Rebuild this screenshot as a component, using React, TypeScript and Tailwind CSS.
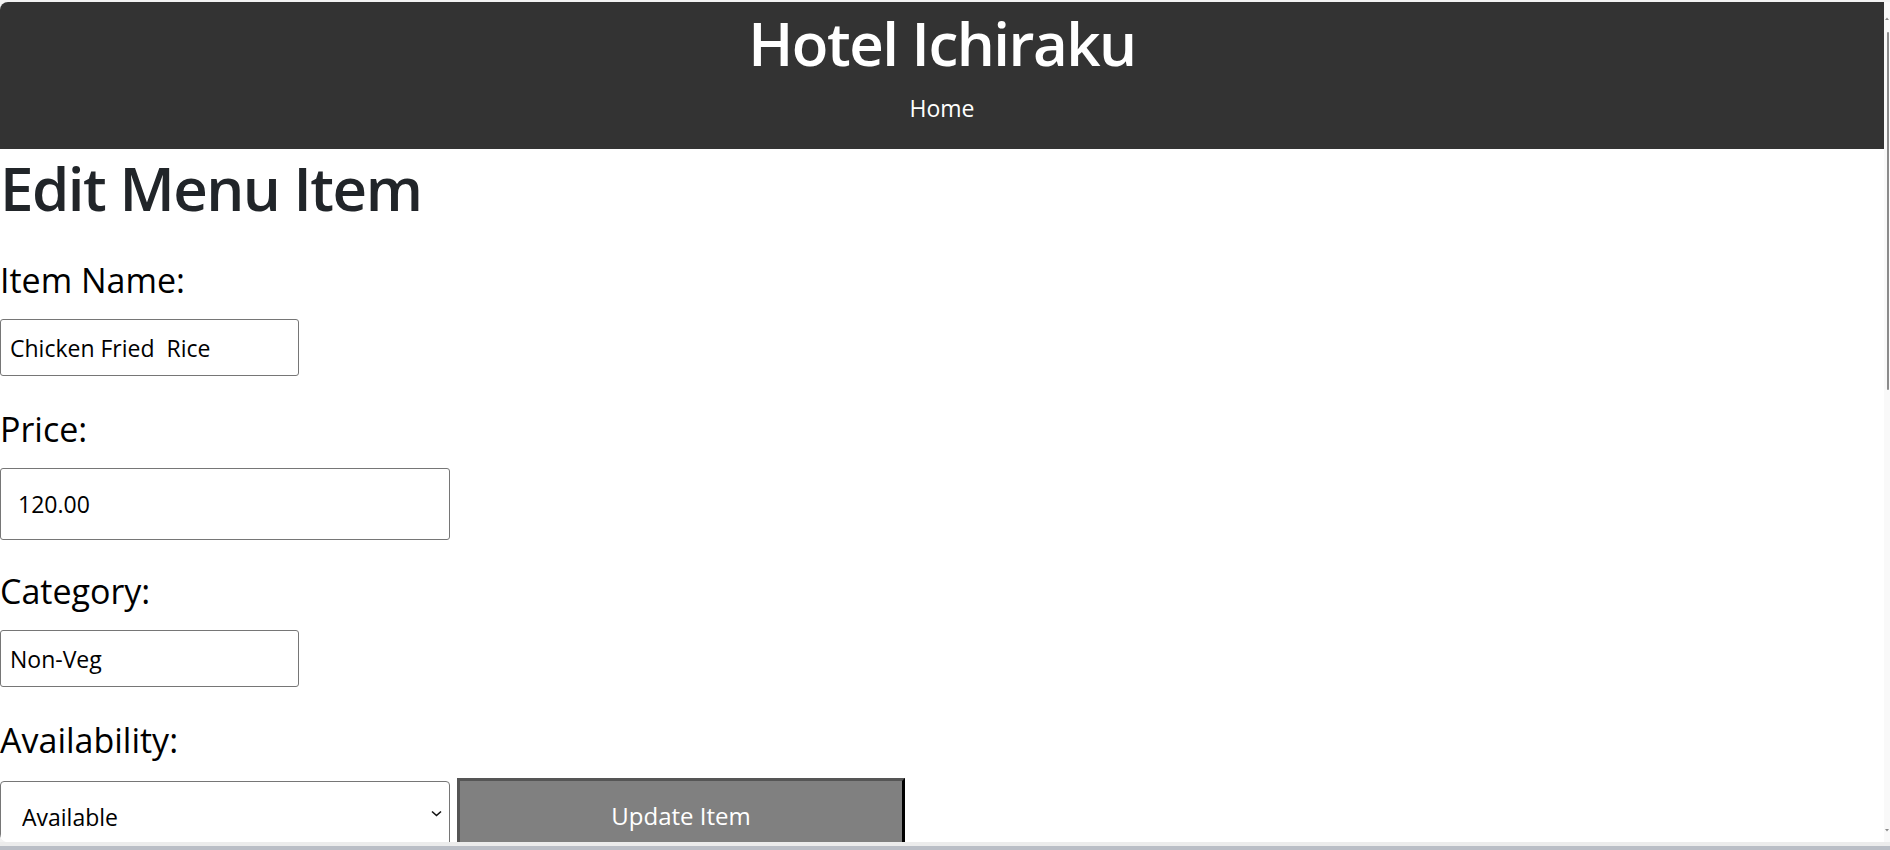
import React from 'react';

const font = { fontFamily: '"Open Sans", "Noto Sans", sans-serif' };

const App: React.FC = () => {
  return (
    <div className="w-[1890px] h-[850px] bg-[#f3f3f3] pt-[2px] flex flex-col overflow-hidden" style={font}>
      {/* browser window */}
      <div className="h-[840px] flex bg-white rounded-l-lg overflow-hidden">
        <div className="w-[1884px] h-full overflow-hidden">
          {/* Header */}
          <header className="bg-[#333333] h-[147px] text-white text-center">
            <h1 className="text-[60px] leading-[82px] font-semibold tracking-[-1.5px]">Hotel Ichiraku</h1>
            <nav className="mt-[6px]">
              <a className="text-[23px] leading-[36px] text-white">Home</a>
            </nav>
          </header>

          <h1 className="text-[60px] leading-[78px] font-semibold tracking-[-1.5px] text-[#212529]">Edit Menu Item</h1>

          <form className="flex flex-col items-start text-black">
            <label className="text-[34px] leading-[54px] mt-[26px]">Item Name:</label>
            <input
              defaultValue="Chicken Fried  Rice"
              className="mt-[12px] w-[299px] h-[57px] border border-[#767676] rounded-[3px] pl-[9px] text-[23px] outline-none"
            />

            <label className="text-[34px] leading-[54px] mt-[26px]">Price:</label>
            <input
              defaultValue="120.00"
              className="mt-[12px] w-[450px] h-[72px] border border-[#767676] rounded-[3px] pl-[17px] text-[23px] outline-none"
            />

            <label className="text-[34px] leading-[54px] mt-[24px]">Category:</label>
            <input
              defaultValue="Non-Veg"
              className="mt-[12px] w-[299px] h-[57px] border border-[#767676] rounded-[3px] pl-[9px] text-[23px] outline-none"
            />

            <label className="text-[34px] leading-[54px] mt-[26px]">Availability:</label>
            <div className="flex items-start gap-[7px]">
              <div className="relative mt-[14px]">
                <select className="appearance-none w-[450px] h-[72px] border border-[#767676] rounded-[4px] pl-[21px] text-[23px] bg-white outline-none">
                  <option>Available</option>
                  <option>Not Available</option>
                </select>
                <svg className="absolute left-[431px] top-[29px]" width="11" height="7" viewBox="0 0 11 7" fill="none">
                  <path d="M1 1.5 L5.5 5.5 L10 1.5" stroke="#111" strokeWidth="1.6" />
                </svg>
              </div>
              <button
                type="button"
                className="mt-[11px] w-[448px] h-[76px] bg-[#808080] text-white text-[24px] border-[3px] border-t-[#555555] border-l-[#555555] border-r-black border-b-black"
              >
                Update Item
              </button>
            </div>
          </form>
        </div>

        {/* scrollbar */}
        <div className="w-[6px] h-full bg-[#f9f9f9] flex flex-col items-end pr-px">
          <svg className="mt-[15px]" width="4" height="4" viewBox="0 0 4 4">
            <path d="M0 3 L2 0.5 L4 3 Z" fill="#8a8a8a" />
          </svg>
          <div className="mt-[11px] w-[2px] h-[358px] bg-[#8b8b8b] rounded-full" />
          <div className="flex-1" />
          <svg className="mb-[10px]" width="4" height="4" viewBox="0 0 4 4">
            <path d="M0 1 L2 3.5 L4 1 Z" fill="#8a8a8a" />
          </svg>
        </div>
      </div>

      {/* bottom edge */}
      <div className="h-[4px] bg-[#ececec]" />
      <div className="flex-1 bg-[#babec6]" />
    </div>
  );
};

export default App;
